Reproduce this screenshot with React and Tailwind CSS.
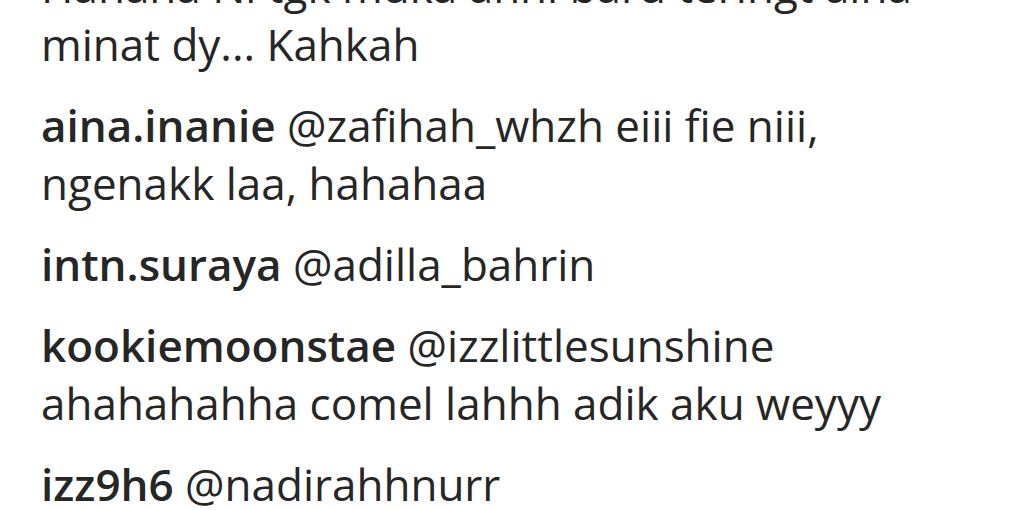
export default function App() {
  const comments = [
    { user: null, lines: ["Hahaha Ni tgk muka anni baru teringt aina", "minat dy... Kahkah"] },
    { user: "aina.inanie", lines: ["@zafihah_whzh eiii fie niii,", "ngenakk laa, hahahaa"] },
    { user: "intn.suraya", lines: ["@adilla_bahrin"] },
    { user: "kookiemoonstae", lines: ["@izzlittlesunshine", "ahahahahha comel lahhh adik aku weyyy"] },
    { user: "izz9h6", lines: ["@nadirahhnurr"] },
  ];
  return (
    <div
      className="w-[1020px] h-[510px] overflow-hidden bg-white text-[#262626] pl-[41px]"
      style={{ fontFamily: '"Open Sans", "Noto Sans", sans-serif' }}
    >
      <div className="flex flex-col gap-[23px] mt-[-43px] text-[44px] leading-[58px]">
        {comments.map((c, i) => (
          <p key={i} className="whitespace-nowrap">
            {c.user && <span className="font-semibold">{c.user} </span>}
            {c.lines.map((l, j) => (
              <span key={j}>
                {j > 0 && <br />}
                {l}
              </span>
            ))}
          </p>
        ))}
      </div>
    </div>
  );
}
